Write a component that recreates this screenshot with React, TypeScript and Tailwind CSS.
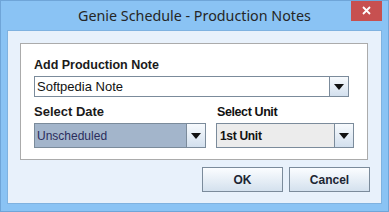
import React from "react";

function Arrow() {
  return (
    <svg width="10" height="6" viewBox="0 0 10 6">
      <path d="M0 0 H10 L5 6 Z" fill="#111" />
    </svg>
  );
}

function DropBtn({ w }: { w: string }) {
  return (
    <div
      className={`${w} h-full flex items-center justify-center border-l border-[#7b8b9b] bg-gradient-to-b from-[#f7fafd] to-[#d3e0ee]`}
    >
      <Arrow />
    </div>
  );
}

export default function App() {
  const font = { fontFamily: '"Liberation Sans", Arial, sans-serif' };
  return (
    <div
      className="w-[389px] h-[212px] bg-[#8ac3f4] border border-[#6fa5d8] flex flex-col overflow-hidden"
      style={font}
    >
      {/* title bar */}
      <div className="h-[29px] flex relative shrink-0">
        <div
          className="flex-1 flex items-center justify-center pt-[1px] text-[14.3px] text-[#262626]"
          style={{ fontFamily: '"Noto Sans", "Open Sans", sans-serif' }}
        >
          Genie Schedule - Production Notes
        </div>
        <div className="absolute right-[6px] top-[-1px] w-[31px] h-[21px] bg-[#c75050] flex items-center justify-center">
          <svg width="9" height="9" viewBox="0 0 9 9">
            <path d="M1 1 L8 8 M8 1 L1 8" stroke="#fff" strokeWidth="1.8" />
          </svg>
        </div>
      </div>
      {/* client */}
      <div className="mx-[6px] h-[174px] bg-[#e8f1fb] border border-[#7fb2e0] flex flex-col shrink-0">
        <div className="mt-[12px] ml-[12px] w-[348px] h-[117px] bg-white border border-[#ababab] flex flex-col px-[13px]">
          <div className="mt-[13px] h-[16px] text-[12.5px] font-bold text-[#1a1a1a] leading-[16px]">
            Add Production Note
          </div>
          <div className="mt-[3px] w-[315px] h-[21px] border border-[#7b8b9b] flex">
            <div className="flex-1 flex items-center pl-[2px] text-[13px] text-[#111]">
              Softpedia Note
            </div>
            <DropBtn w="w-[19px]" />
          </div>
          <div className="mt-[7px] flex">
            <div className="w-[185px] flex flex-col">
              <div className="h-[16px] text-[13px] font-bold text-[#1a1a1a] leading-[16px]">
                Select Date
              </div>
              <div className="mt-[3px] w-[172px] h-[25px] border border-[#7b8b9b] flex">
                <div className="flex-1 flex items-center pl-[2px] bg-[#a3b5cb] text-[12px] text-[#2b2d5c]">
                  Unscheduled
                </div>
                <DropBtn w="w-[19px]" />
              </div>
            </div>
            <div className="flex flex-col">
              <div className="h-[16px] pl-[1px] text-[12.5px] font-bold text-[#111] leading-[16px] tracking-[-0.4px]">
                Select Unit
              </div>
              <div className="mt-[3px] w-[138px] h-[25px] border border-[#7b8b9b] flex">
                <div className="flex-1 flex items-center pl-[3px] bg-[#ececec] text-[12px] font-bold text-[#111] tracking-[-0.3px]">
                  1st Unit
                </div>
                <DropBtn w="w-[19px]" />
              </div>
            </div>
          </div>
        </div>
        <div className="mt-[7px] flex justify-end gap-[6px] pr-[11px]">
          <div className="w-[81px] h-[25px] border border-[#7b8b9b] bg-gradient-to-b from-[#fbfdff] to-[#d4e1ee] flex items-center justify-center text-[12px] font-bold text-[#1c2533]">
            OK
          </div>
          <div className="w-[81px] h-[25px] border border-[#7b8b9b] bg-gradient-to-b from-[#fbfdff] to-[#d4e1ee] flex items-center justify-center text-[12px] font-bold text-[#1c2533]">
            Cancel
          </div>
        </div>
      </div>
    </div>
  );
}
